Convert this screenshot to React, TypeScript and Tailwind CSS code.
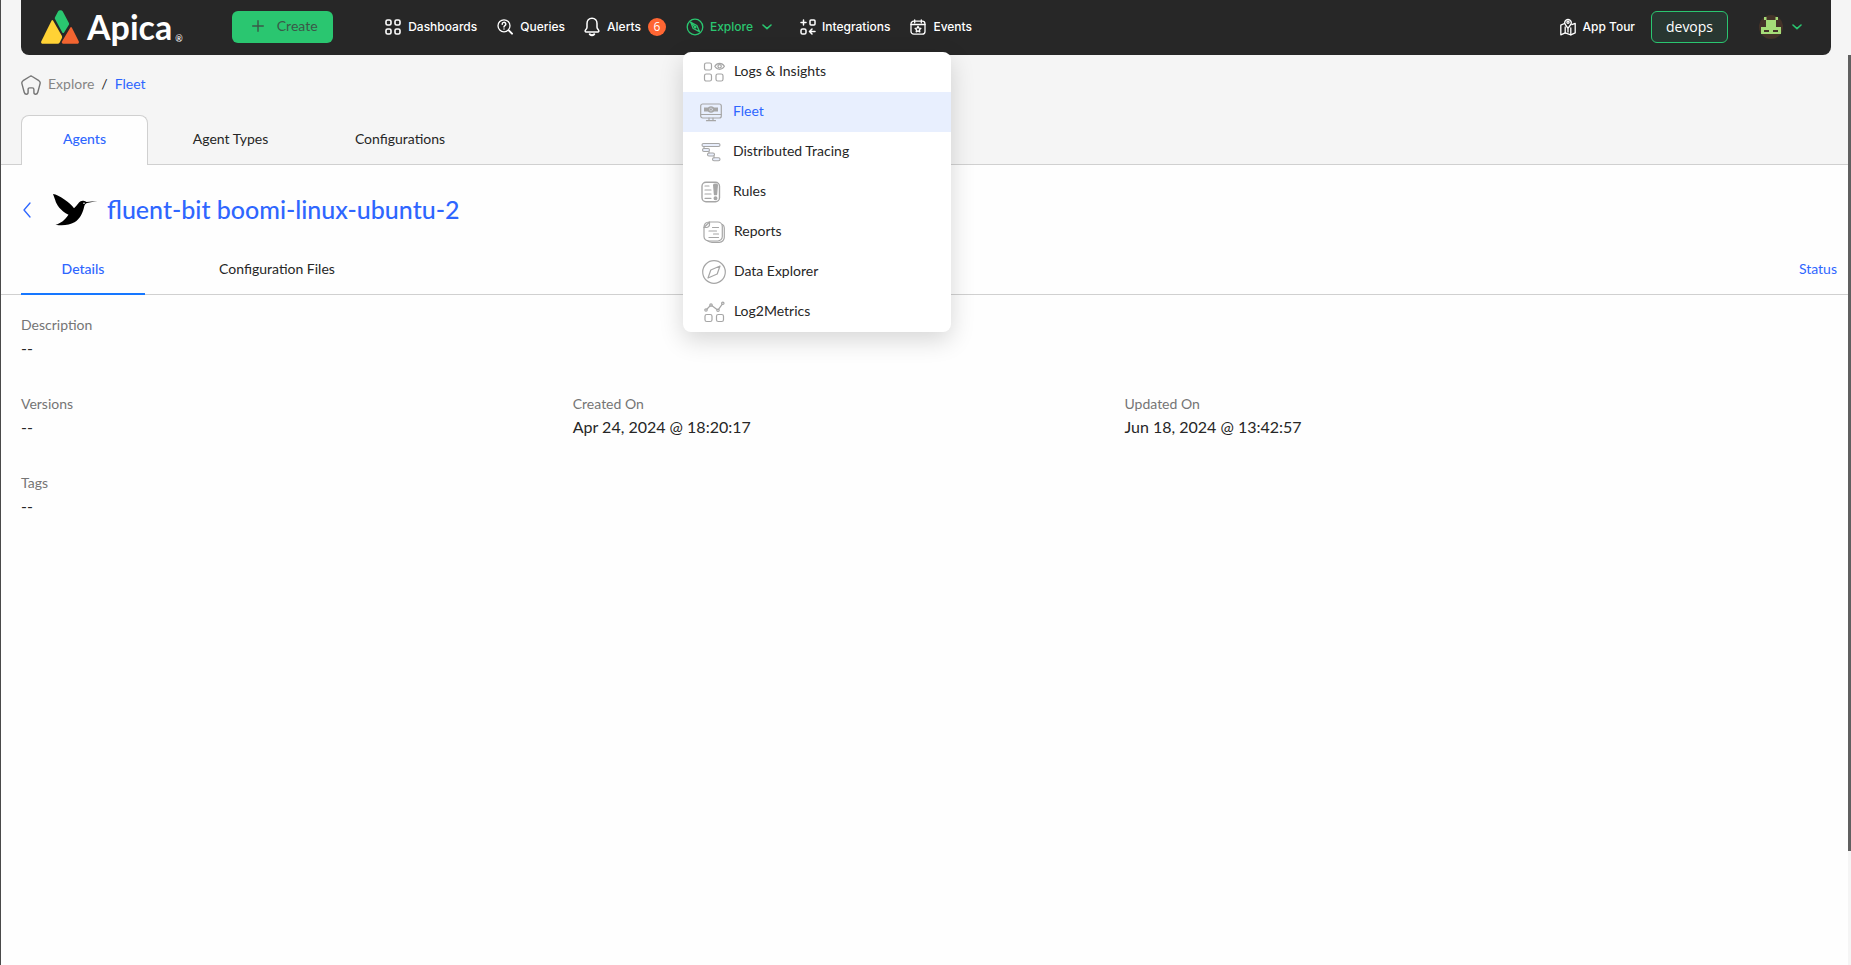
import React from "react";
import type { ReactNode } from "react";

type IconProps = { children: ReactNode; box?: string; className?: string; width?: number };

function Icon({ children, box = "0 0 16 16", className = "size-4", width = 1.4 }: IconProps) {
  return (
    <svg
      viewBox={box}
      className={`${className} shrink-0`}
      fill="none"
      stroke="currentColor"
      strokeWidth={width}
      strokeLinecap="round"
      strokeLinejoin="round"
      aria-hidden="true"
    >
      {children}
    </svg>
  );
}

function Logo() {
  return (
    <a href="#home" aria-label="Apica home" className="flex items-center text-white">
      <svg viewBox="0 0 38 34" className="h-[34px] w-[38px]" aria-hidden="true">
        <path
          d="M12.2 10.8a1 1 0 0 0-1.7 0L.3 31.2c-.6 1.2 0 2.5 1.4 2.5h14.9a2.4 2.4 0 0 0 2.1-1.3l2.1-4.2c.4-.8.4-1.7 0-2.5z"
          fill="#ffd235"
        />
        <path
          d="M17 1.6 14 7.2a2 2 0 0 0 0 1.9l7.3 13.3a1 1 0 0 0 1.8 0l4.8-7.6a1.800 1.800 0 0 0 0-1.800L21.800 1.500A2.700 2.700 0 0 0 19.500.2 2.700 2.700 0 0 0 17 1.600z"
          fill="#2ac670"
        />
        <path
          d="M29.2 17.7a1 1 0 0 1 1.7 0l6.8 13.6c.6 1.1-.1 2.4-1.4 2.4H22.2c-1.2 0-1.8-1.1-1.2-2.2z"
          fill="#f26430"
        />
      </svg>
      <span className="ml-2 font-[Lato,sans-serif] text-[34px] leading-10 font-bold">Apica</span>
      <span className="ml-[3px] w-[7px] self-end font-[Lato,sans-serif] text-[9px] leading-4">®</span>
    </a>
  );
}

function GridIcon() {
  return (
    <Icon width={1.6}>
      <rect x="1" y="1" width="5" height="5" rx="1.6" />
      <rect x="10" y="1" width="5" height="5" rx="1.6" />
      <rect x="1" y="10" width="5" height="5" rx="1.6" />
      <rect x="10" y="10" width="5" height="5" rx="1.6" />
    </Icon>
  );
}

function QueryIcon() {
  return (
    <Icon width={1.3}>
      <circle cx="7" cy="6.8" r="6" />
      <path d="M5.200 5.200a1.800 1.800 0 1 1 2.700 1.500c-.6.400-.9.700-.9 1.300M7 9.900v.1" strokeWidth="1.500" />
      <path d="m12 11.600 3 3" strokeWidth="2" />
    </Icon>
  );
}

function BellIcon() {
  return (
    <Icon box="0 0 16 20" className="h-5 w-4" width={1.5}>
      <path d="M8 1.300C4.800 1.300 3 3.700 3 6.600v3.600c0 1-.5 1.600-1.300 2.500-1 1.100-.7 2.300.7 2.300h11.200c1.400 0 1.700-1.200.7-2.300-.8-.9-1.300-1.500-1.300-2.500V6.600c0-2.900-1.800-5.300-5-5.300z" />
      <path d="M5.800 17.300c1.200 1.100 3.200 1.100 4.400 0" strokeWidth="2" />
    </Icon>
  );
}

function ExploreIcon() {
  return (
    <Icon box="0 0 18 18" className="size-[18px]" width={1.3}>
      <circle cx="9" cy="9" r="7.800" />
      <path d="M4.800 4.300 10.900 7.500 13.400 13.600 7.200 10.500z" />
      <path d="m4.800 4.300 4.400 4.900" />
      <circle cx="9.200" cy="9.200" r=".7" />
    </Icon>
  );
}

function IntegrationsIcon() {
  return (
    <Icon width={1.5}>
      <path d="M1 3.500h5M3.500 1v5" />
      <rect x="10" y="1" width="5" height="5" rx="1" />
      <rect x="1" y="10" width="5" height="5" rx="1.600" />
      <path d="M15 12.500h-5M12 10l-2.500 2.500L12 15" />
    </Icon>
  );
}

function EventsIcon() {
  return (
    <Icon width={1.3}>
      <rect x="1" y="2.200" width="14" height="13" rx="2.800" />
      <path d="M1 5.500h14M4.700.8v3M11.300.8v3" />
      <path d="m8 7.300.9 1.800 2 .3-1.400 1.400.3 2L8 11.900l-1.800.9.3-2-1.400-1.400 2-.3z" />
    </Icon>
  );
}

function MapIcon() {
  return (
    <Icon box="0 0 16 18" className="h-[18px] w-4" width={1.3}>
      <path d="M4.500 5.500.8 7.200v9.600l4.400-1.900 5.600 1.900 4.400-1.900V5.300l-3.400 1.300" />
      <path d="M5.200 9v5.900M10.800 10v6.800" />
      <path d="M8 10.300 5.300 6.500a3.200 3.200 0 1 1 5.400 0zM8 11v3" />
      <circle cx="8" cy="4.300" r="1.100" />
    </Icon>
  );
}

function Chevron() {
  return (
    <Icon box="0 0 10 6" className="h-[6px] w-[10px] text-[#2ac670]" width={1.6}>
      <path d="m1 1 4 3.600L9 1" />
    </Icon>
  );
}

const nav = [
  { label: "Dashboards", icon: <GridIcon />, place: "gap-[7px]" },
  { label: "Queries", icon: <QueryIcon />, place: "gap-[7px] ml-5" },
  { label: "Alerts", icon: <BellIcon />, place: "gap-[7px] ml-[19px]", count: 6 },
];

const menu: { label: string; place: string; active?: boolean; icon: ReactNode }[] = [
  {
    label: "Logs & Insights",
    place: "pl-5 gap-[9px]",
    icon: (
      <Icon box="0 0 22 22" className="size-[22px]" width={1.200}>
        <rect x="1.500" y="2" width="7" height="7" rx="1.800" />
        <rect x="1.500" y="13" width="7" height="7" rx="1.800" />
        <rect x="13" y="13" width="7" height="7" rx="1.800" />
        <path d="M11.800 5.300c2.400-4 7.200-4 9.600 0-2.400 4-7.200 4-9.600 0z" />
        <circle cx="16.600" cy="5.300" r="1.700" />
      </Icon>
    ),
  },
  {
    label: "Fleet",
    place: "pl-[17px] gap-[11px]",
    active: true,
    icon: (
      <Icon box="0 0 22 22" className="size-[22px]" width={1.200}>
        <rect x=".7" y="3" width="20.600" height="14" rx="2" />
        <path d="M1 13.500h20M9 17v2.500M13 17v2.500M6.500 19.700h9" />
        <rect x="4" y="6.500" width="14" height="4" fill="currentColor" stroke="none" />
        <circle cx="11" cy="8.500" r="3.200" fill="currentColor" stroke="none" />
        <circle cx="11" cy="8.500" r="1.500" stroke="#d5dae5" strokeWidth=".7" />
      </Icon>
    ),
  },
  {
    label: "Distributed Tracing",
    place: "pl-[17px] gap-[11px]",
    icon: (
      <Icon box="0 0 22 22" className="size-[22px]" width={1.100}>
        <g fill="#e8eefc">
          <rect x="2" y="2.500" width="18" height="3" rx="1.500" />
          <rect x="2.500" y="7.500" width="7" height="3" rx="1.500" />
          <rect x="7.500" y="12" width="7" height="3" rx="1.500" />
          <rect x="12.500" y="16.700" width="7.500" height="3" rx="1.500" />
        </g>
        <path d="M4 5.500v2M9 10.500v1.500M14 15v1.700" />
      </Icon>
    ),
  },
  {
    label: "Rules",
    place: "pl-[17px] gap-[11px]",
    icon: (
      <Icon box="0 0 22 22" className="size-[22px]" width={1.400}>
        <rect x="2" y="1.200" width="17.500" height="19.600" rx="4" />
        <path d="M5 5h4M5 9h6M5 13h6M5 17.300h6" strokeWidth="1.200" />
        <path d="M13.700 4c0-1 3.600-1 3.600 0l-.8 9.500h-2z" fill="currentColor" />
        <circle cx="15.500" cy="17.300" r="1.300" fill="currentColor" />
      </Icon>
    ),
  },
  {
    label: "Reports",
    place: "pl-5 gap-[9px]",
    icon: (
      <Icon box="0 0 22 22" className="size-[22px]" width={1.200}>
        <path d="M6.500 1h8.300a4.500 4.500 0 0 1 4.500 4.500v10a4.500 4.500 0 0 1-4.500 4.500H5.500A4.500 4.500 0 0 1 1 15.500V6.500z" />
        <path d="M6.500 1v2.500a3 3 0 0 1-3 3H1M6.500 1C3 1 1 3 1 6.500" />
        <path d="M19.500 3.500c1.300 1 1.800 2 1.800 3.500v9a5 5 0 0 1-5 5.300H9c-2 0-3.500-.5-4.500-1.600" />
        <path d="M9.500 6.500h6M6 10h7.500M10.500 13h5M6 16.500h9.500" />
      </Icon>
    ),
  },
  {
    label: "Data Explorer",
    place: "pl-[19px] gap-2",
    icon: (
      <Icon box="0 0 24 24" className="size-6" width={1.200}>
        <circle cx="12" cy="12" r="11.300" />
        <path d="m18 6-2.800 8L6 18l2.800-8z" />
      </Icon>
    ),
  },
  {
    label: "Log2Metrics",
    place: "pl-5 gap-[9px]",
    icon: (
      <Icon box="0 0 22 22" className="size-[22px]" width={1.200}>
        <rect x="2" y="13.500" width="7" height="7" rx="1.800" />
        <rect x="13.500" y="13.500" width="7" height="7" rx="1.800" />
        <path d="M4 8 7 5M9 4.800l5 3.800M15.700 8.200l3.600-5" />
        <circle cx="3" cy="9" r="1.200" />
        <circle cx="8" cy="4" r="1.200" />
        <circle cx="15" cy="9.300" r="1.200" />
        <circle cx="19.800" cy="2.300" r="1.200" />
      </Icon>
    ),
  },
];

function ExploreMenu() {
  return (
    <ul className="absolute top-full left-0 z-10 w-[268px] overflow-hidden rounded-lg bg-white font-[Lato,sans-serif] text-sm font-normal shadow-[0_8px_24px_rgba(0,0,0,0.16)]">
      {menu.map((item) => (
        <li key={item.label}>
          <a
            href="#explore"
            className={`flex h-10 items-center ${item.place} ${
              item.active ? "bg-[#e8effe] text-[#2e66ff]" : "text-[#262626]"
            }`}
          >
            <span className="text-[#a6a6a6]">{item.icon}</span>
            <span className="pb-0.5">{item.label}</span>
          </a>
        </li>
      ))}
    </ul>
  );
}

function Header() {
  return (
    <header className="mr-[17px] ml-5 flex h-[55px] items-center rounded-b-lg bg-[#272727] pr-[29px] pb-px pl-5 font-[Inter,sans-serif] text-xs font-medium text-white">
      <Logo />
      <button
        type="button"
        className="ml-[50px] flex h-8 w-[101px] items-center justify-center gap-[13px] rounded-md bg-[#2ac670] pb-0.5 pl-1 font-[Lato,sans-serif] text-sm font-normal text-[#3b5848]"
      >
        <Icon box="0 0 12 12" className="size-3" width={1.400}>
          <path d="M6 .7v10.600M.7 6h10.600" />
        </Icon>
        Create
      </button>
      <nav className="ml-[52px] flex items-center">
        {nav.map((item) => (
          <a key={item.label} href="#nav" className={`flex items-center ${item.place}`}>
            {item.icon}
            {item.label}
            {item.count && (
              <span className="flex size-[18px] items-center justify-center rounded-full bg-[#ff6633] font-[Open_Sans,sans-serif] text-xs font-normal">
                {item.count}
              </span>
            )}
          </a>
        ))}
        <div className="relative ml-[17px] py-4">
          <button type="button" className="flex items-center gap-[6px] pl-[3px] text-[#2ac670]">
            <ExploreIcon />
            Explore
            <span className="ml-[3px]">
              <Chevron />
            </span>
          </button>
          <ExploreMenu />
        </div>
        <a href="#integrations" className="ml-7 flex items-center gap-[6px]">
          <IntegrationsIcon />
          Integrations
        </a>
        <a href="#events" className="ml-5 flex items-center gap-[7px]">
          <EventsIcon />
          Events
        </a>
      </nav>
      <a href="#tour" className="ml-auto flex items-center gap-[6px]">
        <MapIcon />
        App Tour
      </a>
      <button
        type="button"
        className="ml-4 h-8 w-[77px] rounded-md border border-[#2ac670] bg-[#283731] font-[Open_Sans,sans-serif] text-sm font-normal"
      >
        devops
      </button>
      <button type="button" aria-label="Account" className="ml-[31px] flex items-center gap-[9px]">
        <svg viewBox="0 0 24 24" className="size-6" aria-hidden="true">
          <circle cx="12" cy="12" r="12" fill="#443329" />
          <path
            d="M5 2h2.500v3h9V2H19v3h-2v7h5v7H2v-7h5V5H5zM5 15v2h5v-2zm9 0v2h5v-2z"
            fill="#a5dc78"
            fillRule="evenodd"
          />
        </svg>
        <Chevron />
      </button>
    </header>
  );
}

function Field({ label, value }: { label: string; value: string }) {
  return (
    <div>
      <dt className="text-sm leading-[21px] text-[#757575]">{label}</dt>
      <dd className="text-base leading-[25px] text-[#262626]">{value}</dd>
    </div>
  );
}

export default function App() {
  return (
    <div className="flex min-h-screen border-l border-[#4a4a4a] bg-[#f5f5f5] font-[Lato,sans-serif] text-sm text-[#262626]">
      <div className="flex min-w-0 flex-1 flex-col">
        <Header />
        <div className="flex h-[60px] items-center pl-5">
          <svg
            viewBox="0 0 20 20"
            className="size-5 text-[#757575]"
            fill="none"
            stroke="currentColor"
            strokeWidth="1.400"
            strokeLinejoin="round"
            aria-hidden="true"
          >
            <path d="M8.800 1.500a2 2 0 0 1 2.400 0l6.700 4.200c1 .7 1.500 1.700 1.200 2.900l-2.300 8.600c-.4 1.400-1.200 2-2.200 2-1.100 0-1.700-.8-1.700-2v-2.700c0-1-.6-1.600-1.600-1.600H8.700c-1 0-1.600.6-1.600 1.600v2.700c0 1.200-.6 2-1.700 2-1 0-1.800-.6-2.200-2L.9 8.600c-.3-1.200.2-2.200 1.200-2.900z" />
          </svg>
          <nav className="ml-[7px] flex gap-[7px] pb-0.5">
            <a href="#explore" className="text-[#858585]">
              Explore
            </a>
            <span>/</span>
            <a href="#fleet" className="text-[#2e66ff]">
              Fleet
            </a>
          </nav>
        </div>
        <div className="flex h-[50px] gap-[2px] border-b border-[#d0d0d0] pl-5">
          <button
            type="button"
            className="-mb-px w-[127px] rounded-t-lg border border-b-0 border-[#d0d0d0] bg-[#fefefe] pb-[3px] font-medium text-[#2e66ff]"
          >
            Agents
          </button>
          <button type="button" className="w-[161px] pb-0.5">
            Agent Types
          </button>
          <button type="button" className="w-[174px] pb-0.5">
            Configurations
          </button>
        </div>
        <main className="flex-1 bg-[#fefefe]">
          <div className="flex items-center pt-[26px] pl-5">
            <button type="button" aria-label="Back" className="text-[#2e66ff]">
              <Icon box="0 0 10 16" className="h-4 w-[10px]" width={1.300}>
                <path d="M9 1 3 8l6 7" />
              </Icon>
            </button>
            <svg viewBox="0 0 46 34" className="ml-[21px] h-[34px] w-[46px]" aria-hidden="true">
              <path
                d="M1 1c3 .4 7 2.400 11 5.200 4.500 3 8 5.800 10 9 1.500-1.500 3-3 4-4.500 1.400-2.300 3.200-3.200 5.500-3 1.300.1 2.200.6 3 1.200l10.800-.9L35 10c-1.500.5-2.300 1.700-2.800 3.500C31 19.500 28 26 22.500 29.300 17.500 32 11 33 3.500 31.800c5.500-1.300 9.500-5 13-10C8.500 17.500 4.500 12 3.200 7z"
                fill="#000"
              />
              <circle cx="32" cy="10.200" r=".8" fill="#fff" />
            </svg>
            <h1 className="ml-[9px] pb-0.5 text-[25px] leading-9 font-medium text-[#2e66ff]">
              fluent-bit boomi-linux-ubuntu-2
            </h1>
          </div>
          <div className="mt-[17px] flex h-[49px] items-stretch gap-8 border-b border-[#d0d0d0] pr-[11px] pl-5">
            <button
              type="button"
              className="-mb-px w-[124px] border-b-2 border-[#1677ff] pb-0.5 font-medium text-[#2e66ff]"
            >
              Details
            </button>
            <button type="button" className="w-[200px] pb-0.5">
              Configuration Files
            </button>
            <button type="button" className="ml-auto pb-0.5 text-[#2e66ff]">
              Status
            </button>
          </div>
          <dl className="grid grid-cols-[30.2%_30.2%_1fr] gap-y-[33px] pt-[19px] pl-5">
            <div className="col-span-3">
              <Field label="Description" value="--" />
            </div>
            <Field label="Versions" value="--" />
            <Field label="Created On" value="Apr 24, 2024 @ 18:20:17" />
            <Field label="Updated On" value="Jun 18, 2024 @ 13:42:57" />
            <div className="col-span-3">
              <Field label="Tags" value="--" />
            </div>
          </dl>
        </main>
      </div>
      <div className="w-[3px] pt-[55px]">
        <div className="h-[796px] bg-[#606060]" />
      </div>
    </div>
  );
}
